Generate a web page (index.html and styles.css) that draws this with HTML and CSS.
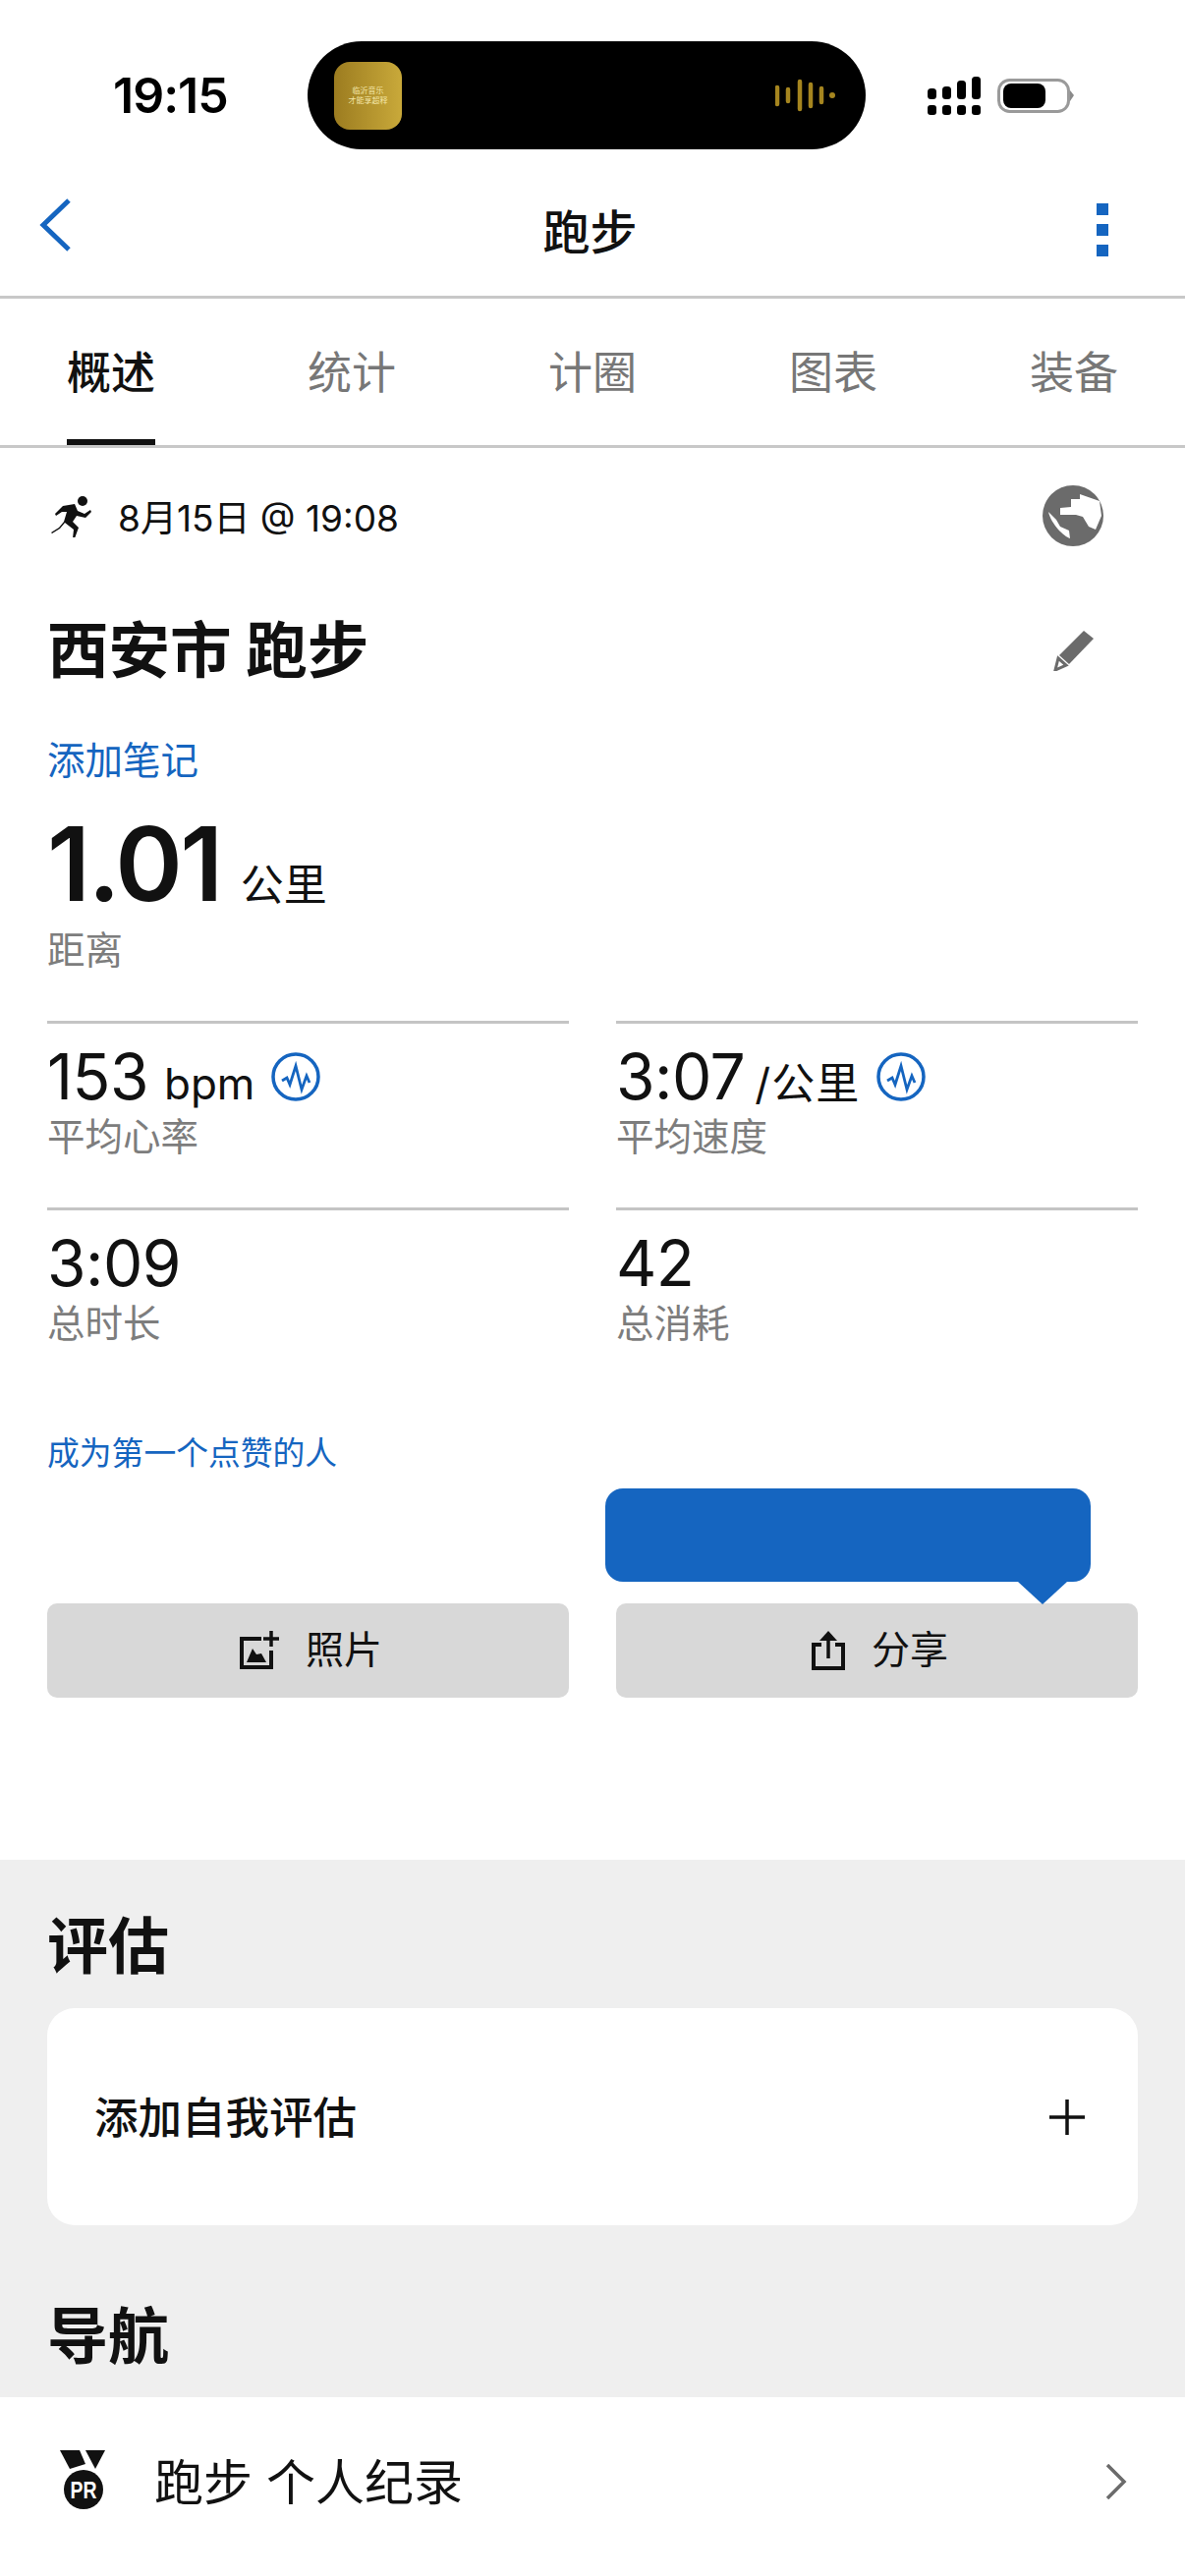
FILE: index.html
```html
<!DOCTYPE html>
<html lang="zh">
<head>
<meta charset="utf-8">
<title>跑步</title>
<link rel="stylesheet" href="styles.css">
</head>
<body>
<header class="top">
  <div class="status">
    <span class="clock">19:15</span>
    <div class="island">
      <div class="tile"><span>临沂音乐</span><span>才能享超释</span></div>
      <svg class="wave" width="62" height="34" viewBox="0 0 62 34"><g stroke="#a5851f" stroke-width="4.5" stroke-linecap="round"><path d="M2 9v17M13 11v12M25 3v28M36 6v22M47 10v14"/></g><circle cx="58" cy="17" r="3" fill="#a5851f"/></svg>
    </div>
    <div class="sys">
      <svg width="54" height="39" viewBox="0 0 54 39"><g fill="#000"><rect x="0" y="29" width="9" height="10" rx="3"/><rect x="15" y="29" width="9" height="10" rx="3"/><rect x="30" y="29" width="9" height="10" rx="3"/><rect x="45" y="29" width="9" height="10" rx="3"/><rect x="0" y="12" width="9" height="11" rx="3.5"/><rect x="15" y="10" width="9" height="13" rx="3.5"/><rect x="30" y="4" width="9" height="19" rx="3.5"/><rect x="45" y="0" width="9" height="23" rx="3.5"/></g></svg>
      <svg class="battery" width="78" height="36" viewBox="0 0 78 36"><rect x="1.5" y="1.5" width="71" height="32" rx="11" fill="none" stroke="#9a9a9a" stroke-width="3"/><rect x="6" y="5" width="43" height="25" rx="8" fill="#000"/><path d="M74 12l4 5-4 6z" fill="#8a8a8a"/></svg>
    </div>
  </div>
  <nav class="navbar">
    <svg class="back" width="34" height="54" viewBox="0 0 34 54"><path d="M31 2 5 27l26 25" fill="none" stroke="#1565c0" stroke-width="5"/></svg>
    <h1 class="nav-title">跑步</h1>
    <div class="kebab"><i></i><i></i><i></i></div>
  </nav>
</header>

<div class="tabs">
  <span class="tab tab-on">概述</span>
  <span class="tab">统计</span>
  <span class="tab">计圈</span>
  <span class="tab">图表</span>
  <span class="tab">装备</span>
</div>

<main class="overview">
  <div class="meta">
    <svg class="runner" width="44" height="44" viewBox="0 0 44 44"><circle cx="32" cy="7" r="5" fill="#111"/><path d="M12 12 24 10l3 7 7 3 6-4 1 2-6 6-9-2-4 6 6 6-4 11-2 0 1-9-9-7-5 6L1 40l-1-1 8-5 5-6 3-10-5 0-6 4-1-2z" fill="#111"/></svg>
    <span class="meta-text">8月15日 @ 19:08</span>
    <svg class="globe" width="62" height="62" viewBox="0 0 62 62"><circle cx="31" cy="31" r="31" fill="#6b6b6b"/><path d="M38 9 58 16 60 31 54 45 47 42 41 32 34 30 18 30 18 23 29 22 29 14 38 14z" fill="#fff"/><path d="M6 27C9 40 22 52 28 54L27 46 18 42 14 35z" fill="#fff"/></svg>
  </div>
  <div class="title-row">
    <h2 class="activity">西安市 跑步</h2>
    <svg width="42" height="42" viewBox="0 0 42 42"><path d="M31 1 41 9 16 35 6 26z" fill="#6b6b6b"/><path d="M5 29 13 36 2 41z" fill="none" stroke="#6b6b6b" stroke-width="3"/></svg>
  </div>
  <a class="note">添加笔记</a>
  <div class="distance"><b>1.01</b><span>公里</span></div>
  <div class="label label-dist">距离</div>

  <div class="stats">
    <div class="stat">
      <div class="value"><b>153</b><span class="unit">bpm</span>
        <svg class="pulse" width="50" height="50" viewBox="0 0 50 50"><circle cx="25" cy="25" r="23" fill="none" stroke="#1565c0" stroke-width="3.5"/><path d="M11 29l5-3 3 7 6-19 6 24 5-14 3 7" fill="none" stroke="#1565c0" stroke-width="2.8"/></svg>
      </div>
      <div class="label">平均心率</div>
    </div>
    <div class="stat">
      <div class="value"><b>3:07</b><span class="unit unit-km">/公里</span>
        <svg class="pulse" width="50" height="50" viewBox="0 0 50 50"><circle cx="25" cy="25" r="23" fill="none" stroke="#1565c0" stroke-width="3.5"/><path d="M11 29l5-3 3 7 6-19 6 24 5-14 3 7" fill="none" stroke="#1565c0" stroke-width="2.8"/></svg>
      </div>
      <div class="label">平均速度</div>
    </div>
    <div class="stat">
      <div class="value"><b>3:09</b></div>
      <div class="label">总时长</div>
    </div>
    <div class="stat">
      <div class="value"><b>42</b></div>
      <div class="label">总消耗</div>
    </div>
  </div>

  <a class="like">成为第一个点赞的人</a>

  <div class="actions">
    <button class="btn">
      <svg width="40" height="40" viewBox="0 0 40 40"><path d="M22 8H2v29h30V20" fill="none" stroke="#111" stroke-width="4"/><path d="M32 0v16M24 8h16" stroke="#111" stroke-width="3.5"/><path d="M7 32 13 18l4 6 5-1 5 9z" fill="#111"/></svg>
      <span class="btn-text">照片</span>
    </button>
    <button class="btn">
      <svg width="34" height="40" viewBox="0 0 34 40"><path d="M10 14H2v24h30V14h-8" fill="none" stroke="#111" stroke-width="4"/><path d="M17 28V4" stroke="#111" stroke-width="3.5"/><path d="M8 10 17 0l9 10z" fill="#111"/></svg>
      <span class="btn-text">分享</span>
    </button>
    <div class="tooltip"></div>
  </div>
</main>

<section class="insights">
  <h3 class="section-title">评估</h3>
  <div class="card">
    <span class="card-text">添加自我评估</span>
    <svg width="40" height="40" viewBox="0 0 40 40"><path d="M20 2v36M2 20h36" stroke="#111" stroke-width="3.5"/></svg>
  </div>
  <h3 class="section-title section-nav">导航</h3>
</section>

<section class="list">
  <svg class="medal" width="48" height="62" viewBox="0 0 48 62"><path d="M1 0h20l6 14-16 5z" fill="#111"/><path d="M27 0h20L37 19z" fill="#111"/><circle cx="25" cy="40" r="20" fill="#111"/><text x="25" y="49" class="pr" textLength="27" lengthAdjust="spacingAndGlyphs">PR</text></svg>
  <span class="list-text">跑步 个人纪录</span>
  <svg class="chev" width="22" height="36" viewBox="0 0 22 36"><path d="M2 1l17 17L2 35" fill="none" stroke="#6b6b6b" stroke-width="3.5"/></svg>
</section>
</body>
</html>
```
FILE: styles.css
```css
* { box-sizing: border-box; }
html, body { margin: 0; padding: 0; }
body {
  width: 1206px;
  height: 2622px;
  overflow: hidden;
  background: #fff;
  color: #111;
  font-family: Inter, "Noto Sans CJK SC", sans-serif;
}
h1, h2, h3 { margin: 0; font-weight: 700; }

.top { height: 304px; border-bottom: 3px solid #c8c8c8; }
.status { height: 152px; padding: 42px 0 0 115px; display: flex; align-items: flex-start; }
.clock { width: 198px; margin-top: 30px; font-size: 50px; line-height: 50px; font-weight: 600; letter-spacing: -1px; color: #000; }
.island {
  width: 568px; height: 110px; border-radius: 55px; background: #000;
  display: flex; align-items: center; justify-content: space-between;
  padding: 0 30px 0 27px;
}
.tile {
  width: 69px; height: 69px; border-radius: 16px;
  background: linear-gradient(90deg, #9c7c20, #c9a93a);
  display: flex; flex-direction: column; align-items: center; justify-content: center;
  font-size: 8px; line-height: 10px; color: #f4e6a8;
}
.sys { margin: 36px 0 0 63px; display: flex; gap: 17px; align-items: flex-start; }
.battery { margin-top: 2px; }

.navbar { height: 149px; padding: 0 78px 0 39px; display: flex; align-items: center; justify-content: space-between; }
.back { margin-top: 5px; }
.nav-title { font-size: 48px; font-weight: 500; margin: 13px 0 0 12px; }
.kebab { display: flex; flex-direction: column; gap: 9px; margin-top: 14px; }
.kebab i { display: block; width: 12px; height: 12px; background: #1565c0; }

.tabs { height: 152px; padding: 0 68px; display: flex; justify-content: space-between; border-bottom: 3px solid #c8c8c8; }
.tab { font-size: 45px; line-height: 152px; color: #777; height: 149px; }
.tab-on { color: #111; font-weight: 500; border-bottom: 6px solid #111; }

.overview { padding: 0 48px; height: 1437px; position: relative; }
.meta { height: 138px; display: flex; align-items: center; }
.runner { margin-left: 4px; }
.meta-text { margin-left: 24px; font-size: 37px; flex: 1; }
.globe { margin-right: 35px; margin-top: 0; }
.title-row { height: 90px; margin-top: 23px; display: flex; align-items: center; justify-content: space-between; padding-right: 44px; }
.activity { font-size: 62.5px; line-height: 90px; }
.note { display: block; margin-top: 44px; font-size: 38.5px; line-height: 46px; color: #1565c0; }
.distance { margin-top: 28px; height: 108px; display: flex; align-items: baseline; }
.distance b { font-size: 104px; line-height: 108px; font-weight: 600; letter-spacing: -2.5px; }
.distance span { margin-left: 20px; font-size: 44px; }
.label { font-size: 38.5px; line-height: 46px; color: #7d7d7d; }
.label-dist { margin-top: 11px; }

.stats { margin-top: 49px; display: grid; grid-template-columns: 531px 531px; column-gap: 48px; }
.stat { height: 190px; border-top: 3px solid #c4c4c4; padding-top: 16px; }
.value { height: 76px; display: flex; align-items: baseline; white-space: nowrap; }
.value b { font-size: 64px; line-height: 76px; font-weight: 400; letter-spacing: -0.5px; }
.unit { margin-left: 16px; font-size: 44px; }
.unit-km { margin-left: 10px; letter-spacing: 1px; }
.pulse { align-self: center; margin-left: 17px; }

.like { display: block; margin-top: 40px; font-size: 32.8px; line-height: 40px; color: #1565c0; }
.actions { position: absolute; left: 48px; right: 48px; top: 1176px; display: grid; grid-template-columns: 531px 531px; column-gap: 48px; }
.btn {
  height: 96px; border: 0; border-radius: 10px; background: #d8d8d8; color: #111;
  font: 38px Inter, "Noto Sans CJK SC", sans-serif;
  display: flex; align-items: center; justify-content: center; gap: 27px;
  padding-left: 12px;
}
.btn-text { font-size: 39px; margin-bottom: 9px; }
.tooltip {
  position: absolute; left: 568px; top: -117px; width: 494px; height: 95px;
  border-radius: 18px; background: #1565c0;
}
.tooltip::after {
  content: ""; position: absolute; left: 420px; top: 95px;
  border-left: 25px solid transparent; border-right: 25px solid transparent; border-top: 23px solid #1565c0;
}

.insights { height: 547px; background: #efefef; padding: 0 48px; }
.section-title { font-size: 62px; line-height: 80px; padding-top: 49px; height: 129px; }
.card {
  height: 221px; margin-top: 22px; padding: 0 52px 0 48px; border-radius: 28px; background: #fff;
  display: flex; align-items: center; justify-content: space-between;
  font-size: 44.5px; font-weight: 500;
}
.card-text { margin-bottom: 4px; }
.section-nav { padding-top: 74px; height: 154px; }

.list { height: 182px; padding: 0 59px 0 60px; display: flex; align-items: center; background: #fff; }
.medal { margin-top: -12px; }
.list-text { flex: 1; margin-left: 49px; margin-bottom: 16px; font-size: 50px; }
.chev { margin-bottom: 10px; }
.pr { font-size: 24px; font-weight: 700; fill: #fff; text-anchor: middle; font-family: "Liberation Sans", sans-serif; }
```
